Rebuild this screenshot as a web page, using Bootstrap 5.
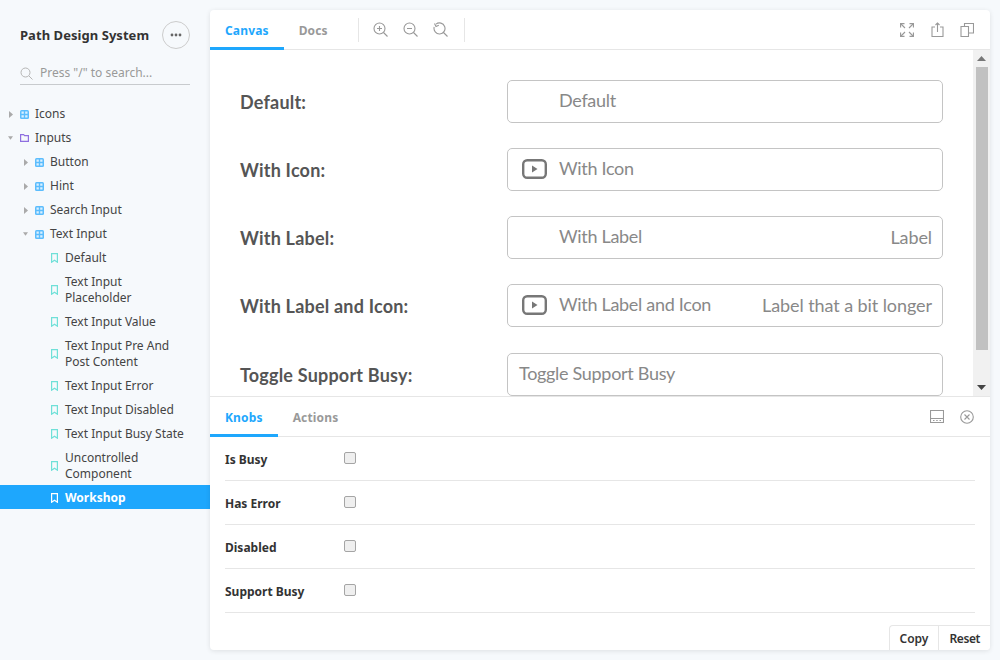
<!DOCTYPE html>
<html lang="en">
<head>
<meta charset="UTF-8" />
<title>Path Design System</title>
<link href="https://cdn.jsdelivr.net/npm/bootstrap@5.3.2/dist/css/bootstrap.min.css" rel="stylesheet" />
<style>
html, body { height: 660px; overflow: hidden; }
body { background: #f6f9fc; font-family: "Noto Sans", "Open Sans", sans-serif; font-size: 12px; color: #444; }
.shell { height: 660px; }
.side { width: 210px; flex: none; }
.brand-row { padding: 20px 20px 0; height: 50px; }
.brand { font-size: 13px; font-weight: 700; color: #333; line-height: 30px; letter-spacing: .05px; }
.more-btn { width: 28px; height: 28px; border: 1px solid #ccc; border-radius: 50%; color: #666; }
.search-row { margin: 12px 20px 0; height: 23px; border-bottom: 1px solid #c8cbce; color: #999; line-height: 20px; gap: 7px; }
.tree { margin-top: 16px; }
.tree-item { min-height: 24px; padding: 5px 22px 3px 0; line-height: 16px; color: #444; }
.lvl0 { padding-left: 8px; }
.lvl1 { padding-left: 23px; }
.lvl2 { padding-left: 50px; }
.caret-box { width: 5px; flex: none; margin-right: 7px; }
.ico-box { width: 9px; flex: none; margin-right: 6px; }
.tree-item.active { background: #1ea7fd; color: #fff; font-weight: 700; }
.main-panel { width: 780px; height: 640px; margin-top: 10px; background: #fff; border-radius: 4px; box-shadow: 0 1px 5px rgba(0,0,0,.1); position: relative; overflow: hidden; }
.bar { height: 40px; border-bottom: 1px solid #e6e6e6; flex: none; }
.bar-tab { height: 40px; padding: 0 15px; line-height: 42px; font-weight: 700; color: #999; letter-spacing: .15px; }
.bar-tab.on { color: #1ea7fd; box-shadow: inset 0 -3px 0 #1ea7fd; }
.vsep { width: 1px; height: 24px; background: #e6e6e6; }
.sep-first { margin-left: 15px; margin-right: 7px; }
.sep-last { margin-left: 8px; }
.tool-ico { width: 30px; display: flex; justify-content: center; }
.canvas-wrap { height: 347px; flex: none; border-bottom: 1px solid #e6e6e6; }
.canvas-pane { flex: 1; padding: 30px 30px 0; overflow: hidden; font-family: Lato, sans-serif; }
.field-row { height: 43px; margin-bottom: 25.13px; }
.field-label { width: 267px; flex: none; padding-top: 2px; font-size: 18px; font-weight: 700; color: #555; letter-spacing: .2px; }
.field-box { width: 436px; height: 43px; flex: none; border: 1px solid #c4c4c4; border-radius: 5px; font-size: 18px; color: #888; padding: 0 10px 2px 0; }
.field-main { letter-spacing: -.3px; }
.field-tag { letter-spacing: -.08px; padding-top: 2px; }
.field-pre { width: 51px; flex: none; display: flex; justify-content: center; padding-left: 2px; }
.field-plain { padding-left: 11px; }
.sbar { width: 17px; flex: none; background: #f1f1f1; }
.sbar-thumb { margin: 0 2px 0 3px; height: 283px; background: #c1c1c1; }
.sbar-btn { height: 17px; }
.knob-row { margin: 0 15px; height: 44px; padding-top: 2px; border-bottom: 1px solid #e6e6e6; font-weight: 700; color: #333; }
.knob-name { width: 119px; flex: none; }
.knob-row .form-check-input { width: 12px; height: 12px; margin: -3px 0 0 0; background-color: #efefef; border: 1px solid #a5a5a5; border-radius: 2px; }
.action-tray { position: absolute; right: 0; bottom: 0; height: 25px; border: 1px solid #e6e6e6; border-right: 0; border-bottom: 0; border-top-left-radius: 4px; background: #fff; }
.action-btn { padding: 0 10px; line-height: 25px; font-weight: 600; color: #333; background: none; border: 0; font-size: 12px; }
.action-btn + .action-btn { border-left: 1px solid #e6e6e6; letter-spacing: -.4px; }
</style>
</head>
<body>
<div class="shell d-flex">
  <div class="side">
    <div class="brand-row d-flex justify-content-between align-items-center">
      <div class="brand">Path Design System</div>
      <div class="more-btn d-flex align-items-center justify-content-center">
        <svg width="12" height="4" viewBox="0 0 12 4"><circle cx="2" cy="2" r="1.4" fill="#666"/><circle cx="6" cy="2" r="1.4" fill="#666"/><circle cx="10" cy="2" r="1.4" fill="#666"/></svg>
      </div>
    </div>
    <div class="search-row d-flex align-items-center">
      <svg width="13" height="13" viewBox="0 0 13 13" fill="none" stroke="#b5b5b5"><circle cx="5.5" cy="5.5" r="4.5"/><path d="M9 9l3.5 3.5"/></svg>
      <span>Press "/" to search...</span>
    </div>
    <div class="tree" id="tree"></div>
  </div>

  <div class="main-panel d-flex flex-column">
    <div class="bar d-flex align-items-center">
      <div class="bar-tab on">Canvas</div>
      <div class="bar-tab">Docs</div>
      <div class="vsep sep-first"></div>
      <div class="tool-ico"><svg width="15" height="15" viewBox="0 0 15 15" fill="none" stroke="#999" stroke-width="1.1"><circle cx="6.5" cy="6.5" r="5.5"/><path d="M10.5 10.500l4 4M6.500 4v5M4 6.500h5"/></svg></div>
      <div class="tool-ico"><svg width="15" height="15" viewBox="0 0 15 15" fill="none" stroke="#999" stroke-width="1.1"><circle cx="6.5" cy="6.5" r="5.5"/><path d="M10.500 10.500l4 4M4 6.500h5"/></svg></div>
      <div class="tool-ico"><svg width="15" height="15" viewBox="0 0 15 15" fill="none" stroke="#999" stroke-width="1.1"><path d="M3 2.200A5.500 5.500 0 1 1 1.200 5M10.500 10.500l4 4M1.500 1.500L3 4.500l2.800-1.200"/></svg></div>
      <div class="vsep sep-last"></div>
      <div class="ms-auto d-flex align-items-center">
        <div class="tool-ico"><svg width="14" height="14" viewBox="0 0 14 14" fill="none" stroke="#999" stroke-width="1.100"><path d="M1 1l4 4M13 1L9 5M1 13l4-4M13 13L9 9"/><path d="M.5 4.500v-4h4M9.500.5h4v4M.5 9.500v4h4M9.500 13.500h4v-4" stroke-width="1.300"/></svg></div>
        <div class="tool-ico"><svg width="13" height="15" viewBox="0 0 13 15" fill="none" stroke="#999" stroke-width="1.100"><path d="M4 5H1v9.500h11V5H9M6.500 10V1M4.500 3l2-2 2 2"/></svg></div>
        <div class="tool-ico me-2"><svg width="14" height="14" viewBox="0 0 14 14" fill="none" stroke="#999" stroke-width="1.100"><path d="M1 3.500h7.500v10H1zM4.500 3.500V.5h9v9.500h-5"/></svg></div>
      </div>
    </div>

    <div class="canvas-wrap d-flex">
      <div class="canvas-pane" id="fields"></div>
      <div class="sbar d-flex flex-column">
        <div class="sbar-btn d-flex align-items-center justify-content-center"><svg width="9" height="5" viewBox="0 0 9 5"><path d="M4.500 0L9 5H0z" fill="#777"/></svg></div>
        <div class="sbar-thumb"></div>
        <div class="sbar-btn mt-auto d-flex align-items-center justify-content-center"><svg width="9" height="5" viewBox="0 0 9 5"><path d="M4.500 5L9 0H0z" fill="#444"/></svg></div>
      </div>
    </div>

    <div class="bar d-flex align-items-center">
      <div class="bar-tab on">Knobs</div>
      <div class="bar-tab">Actions</div>
      <div class="ms-auto d-flex align-items-center me-2">
        <div class="tool-ico"><svg width="14" height="13" viewBox="0 0 14 13" fill="none" stroke="#999" stroke-width="1.100"><path d="M.5.5h13v12H.5zM.5 8.500h13M3 10.500h1.500M6.200 10.500h1.500M9.500 10.500H11"/></svg></div>
        <div class="tool-ico"><svg width="14" height="14" viewBox="0 0 14 14" fill="none" stroke="#999" stroke-width="1.100"><circle cx="7" cy="7" r="6.300"/><path d="M4.500 4.500l5 5M9.500 4.500l-5 5"/></svg></div>
      </div>
    </div>

    <div id="knobs"></div>
    <div class="action-tray d-flex">
      <button class="action-btn" type="button">Copy</button>
      <button class="action-btn" type="button">Reset</button>
    </div>
  </div>
</div>

<script src="https://cdn.jsdelivr.net/npm/bootstrap@5.3.2/dist/js/bootstrap.bundle.min.js"></script>
<script>
const closedCaret = '<svg class="d-block" width="4" height="7" viewBox="0 0 4 7"><path d="M0 0l4 3.500L0 7z" fill="#aaa"/></svg>';
const openCaret = '<svg class="d-block" width="6" height="4" viewBox="0 0 6 4"><path d="M0 0h6L3 4z" fill="#aaa"/></svg>';
const gridIcon = '<svg class="d-block" width="9" height="9" viewBox="0 0 9 9"><rect width="9" height="9" rx="1.500" fill="#5cbdfd"/><path d="M1.500 1.500h2.300v2.300H1.500zM5.200 1.500h2.300v2.300H5.200zM1.500 5.200h2.300v2.300H1.500zM5.200 5.200h2.300v2.300H5.200z" fill="#d9f0ff"/></svg>';
const folderIcon = '<svg class="d-block" width="9" height="8" viewBox="0 0 9 8" fill="none" stroke="#8f6fe0" stroke-width="1.200"><path d="M.6.6h3l1 1h3.800v5.800H.6z"/></svg>';
function bookmark(color) {
    return '<svg class="d-block" width="7" height="10" viewBox="0 0 7 10" fill="none" stroke="' + color + '" stroke-width="1.200"><path d="M.6.6h5.800v8.600L3.500 7.200.6 9.200z"/></svg>';
}

const items = [
    [0, 'closed', 'Icons'],
    [0, 'open', 'Inputs'],
    [1, 'closed', 'Button'],
    [1, 'closed', 'Hint'],
    [1, 'closed', 'Search Input'],
    [1, 'open', 'Text Input'],
    [2, '', 'Default'],
    [2, '', 'Text Input Placeholder'],
    [2, '', 'Text Input Value'],
    [2, '', 'Text Input Pre And Post Content'],
    [2, '', 'Text Input Error'],
    [2, '', 'Text Input Disabled'],
    [2, '', 'Text Input Busy State'],
    [2, '', 'Uncontrolled Component'],
    [2, 'active', 'Workshop']
];

document.getElementById('tree').innerHTML = items.map(function (it) {
    const lvl = it[0];
    const active = it[1] === 'active';
    let icon = gridIcon;
    if (lvl === 2) icon = bookmark(active ? '#fff' : '#6fe0d8');
    if (it[2] === 'Inputs') icon = folderIcon;
    let caret = '';
    if (lvl < 2) {
        caret = '<div class="caret-box d-flex justify-content-center">' + (it[1] === 'open' ? openCaret : closedCaret) + '</div>';
    }
    return '<div class="tree-item d-flex align-items-center lvl' + lvl + (active ? ' active' : '') + '">' +
        caret + '<div class="ico-box d-flex justify-content-center">' + icon + '</div>' +
        '<div class="tree-text">' + it[2] + '</div></div>';
}).join('');

const playIcon = '<svg width="25" height="20" viewBox="0 0 25 20" fill="none"><rect x="1.200" y="1.200" width="22.600" height="17.600" rx="4" stroke="#777" stroke-width="2.400"/><path d="M10 6.500l5.500 3.500L10 13.500z" fill="#777"/></svg>';
const fields = [
    ['Default:', '', 'Default', ''],
    ['With Icon:', playIcon, 'With Icon', ''],
    ['With Label:', '', 'With Label', 'Label'],
    ['With Label and Icon:', playIcon, 'With Label and Icon', 'Label that a bit longer'],
    ['Toggle Support Busy:', null, 'Toggle Support Busy', '']
];

document.getElementById('fields').innerHTML = fields.map(function (f) {
    const pre = f[1] === null ? '' : '<div class="field-pre">' + f[1] + '</div>';
    return '<div class="field-row d-flex align-items-center">' +
        '<div class="field-label">' + f[0] + '</div>' +
        '<div class="field-box d-flex align-items-center' + (f[1] === null ? ' field-plain' : '') + '">' + pre +
        '<span class="field-main">' + f[2] + '</span><span class="ms-auto field-tag">' + f[3] + '</span></div></div>';
}).join('');

document.getElementById('knobs').innerHTML = ['Is Busy', 'Has Error', 'Disabled', 'Support Busy'].map(function (name) {
    return '<div class="knob-row d-flex align-items-center"><div class="knob-name">' + name + '</div>' +
        '<input class="form-check-input" type="checkbox" aria-label="' + name + '"></div>';
}).join('');
</script>
</body>
</html>
